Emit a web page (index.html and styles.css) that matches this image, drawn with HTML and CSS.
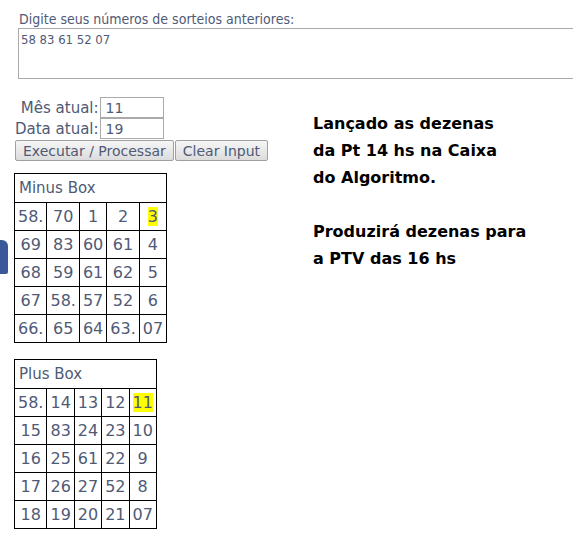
FILE: index.html
```html
<!DOCTYPE html>
<html lang="pt-BR">
<head>
    <meta charset="UTF-8">
    <title>Minus Box / Plus Box</title>
    <link rel="stylesheet" href="styles.css">
</head>
<body>
    <div class="page">
        <div class="intro">
            <label for="draws" class="intro-label">Digite seus números de sorteios anteriores:</label>
            <textarea id="draws">58 83 61 52 07</textarea>
        </div>

        <div class="main">
            <div class="left">
                <table class="dates">
                    <tr>
                        <td class="date-label">Mês atual:</td>
                        <td><input type="text" value="11"></td>
                    </tr>
                    <tr>
                        <td class="date-label">Data atual:</td>
                        <td><input type="text" value="19"></td>
                    </tr>
                </table>
                <div class="actions">
                    <button class="btn">Executar / Processar</button><button class="btn">Clear Input</button>
                </div>

                <table class="box">
                    <tr><th colspan="5">Minus Box</th></tr>
                    <tr><td>58.</td><td>70</td><td>1</td><td>2</td><td><span class="hit">3</span></td></tr>
                    <tr><td>69</td><td>83</td><td>60</td><td>61</td><td>4</td></tr>
                    <tr><td>68</td><td>59</td><td>61</td><td>62</td><td>5</td></tr>
                    <tr><td>67</td><td>58.</td><td>57</td><td>52</td><td>6</td></tr>
                    <tr><td>66.</td><td>65</td><td>64</td><td>63.</td><td>07</td></tr>
                </table>

                <table class="box">
                    <tr><th colspan="5">Plus Box</th></tr>
                    <tr><td>58.</td><td>14</td><td>13</td><td>12</td><td><span class="hit">11</span></td></tr>
                    <tr><td>15</td><td>83</td><td>24</td><td>23</td><td>10</td></tr>
                    <tr><td>16</td><td>25</td><td>61</td><td>22</td><td>9</td></tr>
                    <tr><td>17</td><td>26</td><td>27</td><td>52</td><td>8</td></tr>
                    <tr><td>18</td><td>19</td><td>20</td><td>21</td><td>07</td></tr>
                </table>
            </div>

            <div class="note">
                Lançado as dezenas<br>
                da Pt 14 hs na Caixa<br>
                do Algoritmo.<br>
                <br>
                Produzirá dezenas para<br>
                a PTV das 16 hs
            </div>
        </div>
    </div>

    <div class="side-tab"></div>
</body>
</html>
```

FILE: styles.css
```css
body {
    font-family: "DejaVu Sans", Verdana, sans-serif;
    color: #4f5a76;
    background-color: #fff;
    margin: 0;
    padding: 0;
    overflow: hidden;
}
.page {
    padding: 11px 0 0 14px;
}
.intro {
    display: flex;
    flex-direction: column;
    align-items: flex-start;
}
.intro-label {
    font-family: "DejaVu Sans Condensed", "DejaVu Sans", sans-serif;
    font-size: 14px;
    line-height: 17px;
    margin-left: 5px;
}
textarea {
    box-sizing: border-box;
    width: 570px;
    height: 51px;
    margin: 0 0 0 4px;
    padding: 3px 2px;
    border: 1px solid #aaa;
    font-family: "DejaVu Sans Condensed", "DejaVu Sans", sans-serif;
    font-size: 13px;
    color: #4f5a76;
    resize: none;
}
.main {
    display: grid;
    grid-template-columns: 299px auto;
    margin-top: 18px;
}
.dates {
    border-collapse: collapse;
    margin-left: 1px;
}
.dates td {
    padding: 0;
}
.date-label {
    font-size: 15px;
    text-align: right;
    padding-right: 1px !important;
}
.dates input {
    box-sizing: border-box;
    width: 64px;
    height: 21px;
    margin: 0;
    padding: 0 5px;
    border: 1px solid #aaa;
    font-family: "DejaVu Sans", Verdana, sans-serif;
    font-size: 14px;
    color: #4f5a76;
    display: block;
}
.actions {
    display: flex;
    margin: 1px 0 12px 1px;
}
.btn {
    height: 21px;
    padding: 0 7px;
    margin: 0 1px 0 0;
    border: 1px solid #a0a0a0;
    border-radius: 2px;
    background: linear-gradient(#f6f6f6, #dcdcdc);
    font-family: "DejaVu Sans", Verdana, sans-serif;
    font-size: 14px;
    color: #4f5a76;
}
.box {
    border-collapse: collapse;
    margin-bottom: 16px;
}
.box th {
    border: 1px solid #000;
    font-size: 15px;
    font-weight: normal;
    text-align: left;
    line-height: 20px;
    padding: 4px 4px;
}
.box td {
    border: 1px solid #000;
    font-size: 16px;
    line-height: 19px;
    text-align: center;
    padding: 4px 3px;
}
.hit {
    background-color: #ffff00;
}
.note {
    margin-top: 13px;
    font-family: "Comic Sans MS", "DejaVu Sans", sans-serif;
    font-weight: bold;
    font-size: 16px;
    line-height: 27px;
    color: #000;
}
.side-tab {
    position: fixed;
    left: 0;
    top: 240px;
    width: 8px;
    height: 34px;
    background-color: #3b5998;
    border-radius: 0 6px 2px 0;
}
```
